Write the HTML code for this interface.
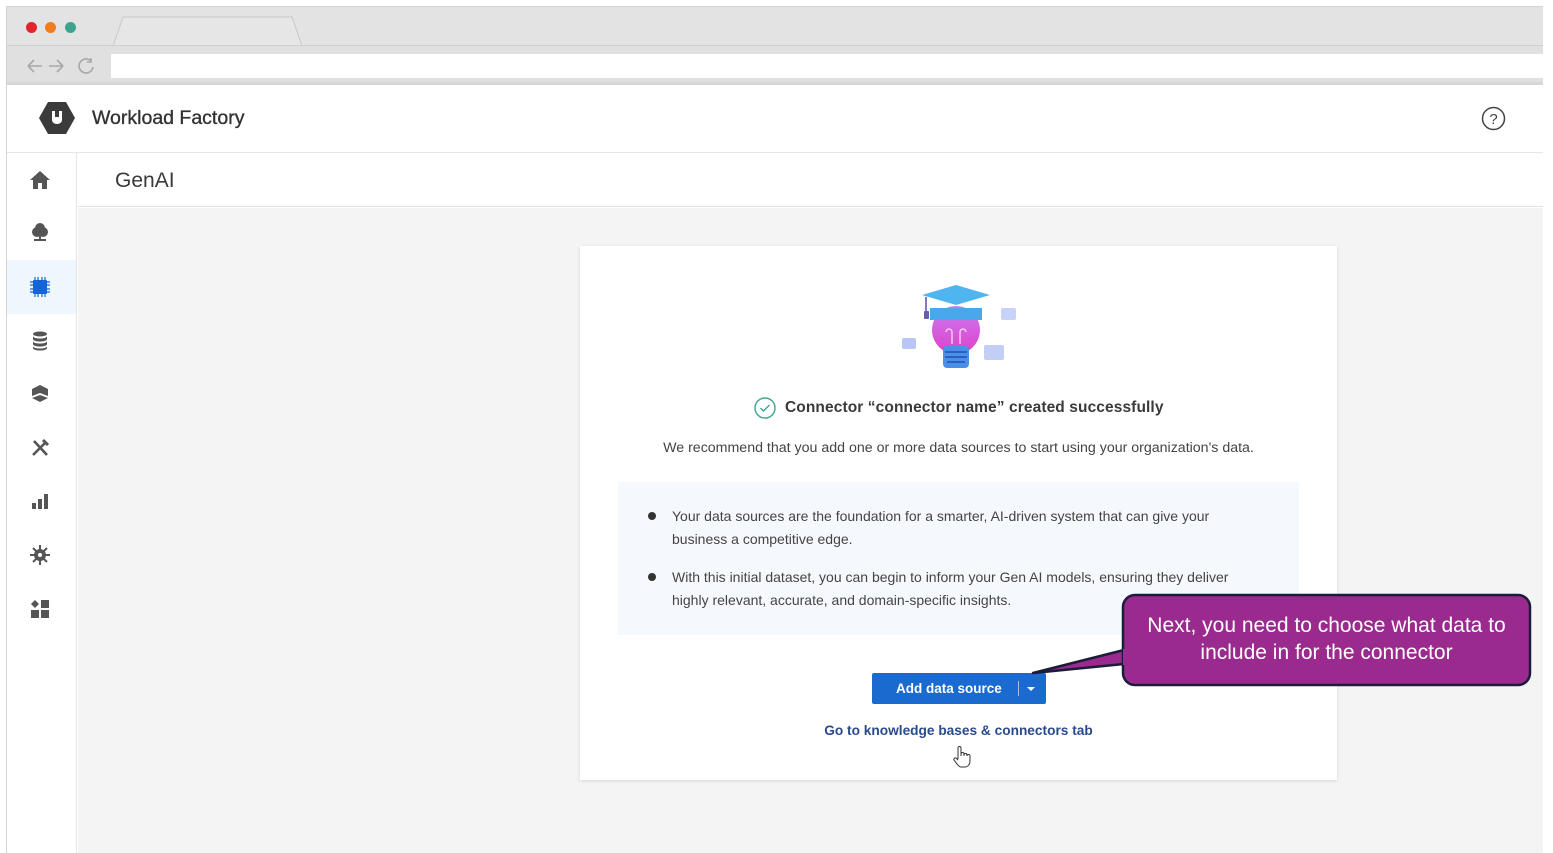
<!DOCTYPE html>
<html><head><style>
*{margin:0;padding:0;box-sizing:border-box}
body{width:1553px;height:853px;background:#fff;position:relative;overflow:hidden;font-family:"Liberation Sans",sans-serif;color:#333}
.a{position:absolute}
.ic{position:absolute;left:29px;width:22px;height:22px}
</style></head><body>
<div class="a" style="left:6px;top:6px;width:1537px;height:847px;border:1px solid #d4d4d4;border-right:none;border-bottom:none;background:#fff"></div>
<div class="a" style="left:7px;top:7px;width:1536px;height:38px;background:#e3e3e3"></div>
<div class="a" style="left:26px;top:22px;width:11px;height:11px;border-radius:50%;background:#e0262b"></div>
<div class="a" style="left:45px;top:22px;width:11px;height:11px;border-radius:50%;background:#f07c1c"></div>
<div class="a" style="left:65px;top:22px;width:11px;height:11px;border-radius:50%;background:#3aa58a"></div>
<svg class="a" style="left:110px;top:15px" width="195" height="31"><path d="M3 31 L13 2 L182 2 L192 31" fill="#e6e6e6" stroke="#c8c8c8" stroke-width="1"/></svg>
<div class="a" style="left:7px;top:45px;width:1536px;height:1px;background:#cfcfcf"></div>
<div class="a" style="left:7px;top:46px;width:1536px;height:36px;background:#e0e0e0"></div>
<div class="a" style="left:111px;top:54px;width:1432px;height:24px;background:#fff"></div>
<svg class="a" style="left:25px;top:56px" width="75" height="20" fill="none" stroke="#a8a8a8" stroke-width="1.6"><path d="M3 10h14M3 10l6-6M3 10l6 6"/><path d="M24 10h14M38 10l-6-6M38 10l-6 6"/><path d="M66 5a7 7 0 1 0 2 6M66 2v4h-4" /></svg>
<div class="a" style="left:7px;top:82px;width:1536px;height:3px;background:#d6d6d6"></div>
<svg class="a" style="left:38px;top:101px" width="38" height="34" viewBox="0 0 38 34"><path d="M10 1h18l9 16-9 16H10L1 17z" fill="#3b3b3b"/><path d="M14 10v9a5 4 0 0 0 10 0v-9h-3v6h-4v-6z" fill="#fff"/></svg>
<div class="a" style="left:92px;top:107px;font-size:19.5px;color:#333;-webkit-text-stroke:0.35px #333">Workload Factory</div>
<svg class="a" style="left:1481px;top:106px" width="25" height="25" fill="none" stroke="#444" stroke-width="1.5"><circle cx="12.5" cy="12.5" r="11"/><text x="12.5" y="18" font-size="15" text-anchor="middle" fill="#444" stroke="none" font-family="Liberation Sans">?</text></svg>
<div class="a" style="left:7px;top:152px;width:1536px;height:1px;background:#e6e6e6"></div>
<div class="a" style="left:7px;top:153px;width:70px;height:700px;background:#fff;border-right:1px solid #e4e4e4"></div>
<div class="a" style="left:7px;top:260px;width:69px;height:54px;background:#f0f6fd"></div>
<svg class="ic" style="top:169px" viewBox="0 0 22 22" fill="#555"><path d="M11 2 1 11h3v9h5v-6h4v6h5v-9h3z"/></svg>
<svg class="ic" style="top:222px" viewBox="0 0 22 22" fill="#555"><circle cx="8" cy="10" r="5"/><circle cx="14" cy="10" r="5"/><circle cx="11" cy="6" r="5"/><rect x="10" y="12" width="2" height="6"/><rect x="5" y="17" width="12" height="2"/></svg>
<svg class="ic" style="top:276px" viewBox="0 0 22 22" fill="#1565d8"><rect x="4" y="4" width="14" height="14" rx="1"/><path d="M6 1v20M9 1v20M13 1v20M16 1v20M1 6h20M1 9h20M1 13h20M1 16h20" stroke="#1565d8" stroke-width="1.2"/></svg>
<svg class="ic" style="top:330px" viewBox="0 0 22 22" fill="#555"><ellipse cx="11" cy="4" rx="7" ry="2.5"/><path d="M4 6v3c0 1.5 3 2.5 7 2.5s7-1 7-2.5V6c0 1.5-3 2.5-7 2.5S4 7.5 4 6zM4 11v3c0 1.5 3 2.5 7 2.5s7-1 7-2.5v-3c0 1.5-3 2.5-7 2.5S4 12.5 4 11zM4 16v2c0 1.5 3 2.5 7 2.5s7-1 7-2.5v-2c0 1.5-3 2.5-7 2.5S4 17.5 4 16z"/></svg>
<svg class="ic" style="top:383px" viewBox="0 0 22 22" fill="#555"><path d="M11 2 3 6v7l8-3zM11 2l8 4v7l-8-3zM3 15l8-3 8 3-8 4z"/></svg>
<svg class="ic" style="top:437px" viewBox="0 0 22 22" fill="none" stroke="#555" stroke-width="2.6"><path d="M4 18 17 5M5 4l13 14"/><path d="M14 3l5 5" stroke-width="3"/></svg>
<svg class="ic" style="top:490px" viewBox="0 0 22 22" fill="#555"><rect x="3" y="13" width="4" height="6"/><rect x="9" y="9" width="4" height="10"/><rect x="15" y="4" width="4" height="15"/></svg>
<svg class="ic" style="top:544px" viewBox="0 0 22 22" fill="#555"><circle cx="11" cy="11" r="6"/><path d="M11 1v20M1 11h20M4 4l14 14M18 4 4 18" stroke="#555" stroke-width="2"/><circle cx="11" cy="11" r="2" fill="#fff"/></svg>
<svg class="ic" style="top:598px" viewBox="0 0 22 22" fill="#555"><path d="M6 2l4 4-4 4-4-4z"/><rect x="12" y="2" width="8" height="8"/><rect x="2" y="12" width="8" height="8"/><rect x="12" y="12" width="8" height="8"/></svg>
<div class="a" style="left:78px;top:153px;width:1465px;height:54px;background:#fff;border-bottom:1px solid #e2e2e2"></div>
<div class="a" style="left:115px;top:169px;font-size:21px;color:#3a3a3a">GenAI</div>
<div class="a" style="left:78px;top:208px;width:1465px;height:645px;background:#f4f4f4"></div>
<div class="a" style="left:580px;top:246px;width:757px;height:534px;background:#fff;box-shadow:0 1px 3px rgba(0,0,0,.12)"></div>
<svg class="a" style="left:898px;top:282px" width="120" height="92" viewBox="0 0 120 92">
<defs><linearGradient id="g" x1="0" y1="0" x2="0" y2="1"><stop offset="0" stop-color="#c77df5"/><stop offset="1" stop-color="#e040c8"/></linearGradient></defs>
<rect x="4" y="56" width="14" height="11" rx="2" fill="#b8c6f5"/><rect x="86" y="63" width="20" height="15" rx="2" fill="#c3cef7"/><rect x="103" y="26" width="15" height="12" rx="2" fill="#c6d2f7"/>
<circle cx="58" cy="48" r="24" fill="url(#g)"/>
<rect x="45" y="64" width="26" height="22" rx="4" fill="#4a90e8"/>
<path d="M47 70h22M47 75h22M49 80h18" stroke="#2a5fc0" stroke-width="2"/>
<path d="M32 26h52v12H32z" fill="#4aa7ea"/>
<path d="M24 13 58 3l34 10-34 10z" fill="#4fb5f0"/>
<path d="M28 15v14" stroke="#5050a0" stroke-width="1.5"/><rect x="26" y="29" width="5" height="8" rx="1" fill="#6a5aa8"/>
<path d="M54 62V50a3 3 0 0 0-6 0M62 62V50a3 3 0 0 1 6 0" fill="none" stroke="#f3c8f0" stroke-width="1.5"/>
</svg>
<svg class="a" style="left:754px;top:397px" width="22" height="22" fill="none" stroke="#3aa58a" stroke-width="1.4"><circle cx="11" cy="11" r="10"/><path d="M6.5 11l3 3 6-6"/></svg>
<div class="a" style="left:785px;top:399px;font-size:15.5px;font-weight:bold;color:#3a3a3a;letter-spacing:.1px">Connector “connector name” created successfully</div>
<div class="a" style="left:580px;width:757px;top:440px;text-align:center;font-size:14.2px;color:#444">We recommend that you add one or more data sources to start using your organization's data.</div>
<div class="a" style="left:618px;top:482px;width:681px;height:153px;background:#f5f9fd"></div>
<div class="a" style="left:648px;top:512px;width:8px;height:8px;border-radius:50%;background:#333"></div>
<div class="a" style="left:648px;top:573px;width:8px;height:8px;border-radius:50%;background:#333"></div>
<div class="a" style="left:672px;top:505px;width:575px;font-size:14px;line-height:23px;color:#444">Your data sources are the foundation for a smarter, AI-driven system that can give your business a competitive edge.</div>
<div class="a" style="left:672px;top:566px;width:575px;font-size:14px;line-height:23px;color:#444">With this initial dataset, you can begin to inform your Gen AI models, ensuring they deliver highly relevant, accurate, and domain-specific insights.</div>
<div class="a" style="left:872px;top:673px;width:174px;height:31px;background:#1a6ad0;border-radius:2px;color:#fff;font-size:13.5px;font-weight:bold"><span class="a" style="left:24px;top:8px">Add data source</span><span class="a" style="left:146px;top:8px;width:1px;height:15px;background:#9cc0ef"></span><span class="a" style="left:155px;top:14px;border:4px solid transparent;border-top:4px solid #fff"></span></div>
<div class="a" style="left:580px;width:757px;top:723px;text-align:center;font-size:13.7px;font-weight:bold;color:#2a4a8a">Go to knowledge bases &amp; connectors tab</div>
<svg class="a" style="left:952px;top:745px" width="20" height="24" fill="#fff" stroke="#333" stroke-width="1"><path d="M6 14V3a1.5 1.5 0 0 1 3 0v8 M9 9a1.5 1.5 0 0 1 3 0v2M12 10a1.5 1.5 0 0 1 3 0v1M15 11a1.5 1.5 0 0 1 3 0v5c0 3-2 6-5 6H9c-2 0-3-2-4-3l-3-4a1.5 1.5 0 0 1 2-2l2 2"/></svg>
<svg class="a" style="left:1028px;top:592px" width="510" height="98"><path d="M5 81 L96 58 L96 72 Z" fill="#9b2a8f" stroke="#1c1c3a" stroke-width="2.5" stroke-linejoin="round"/><rect x="95" y="3" width="407" height="90" rx="12" fill="#9b2a8f" stroke="#1c1c3a" stroke-width="2.5"/><path d="M97 57 L97 73" stroke="#9b2a8f" stroke-width="4"/></svg>
<div class="a" style="left:1124px;top:612px;width:405px;text-align:center;color:#fff;font-size:21px;line-height:27px">Next, you need to choose what data to include in for the connector</div>
</body></html>
